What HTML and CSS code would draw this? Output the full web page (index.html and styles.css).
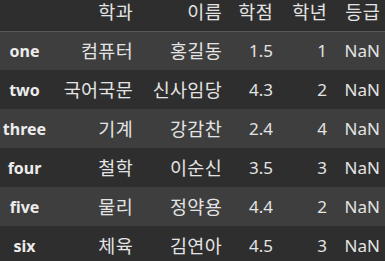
FILE: index.html
```html
<!DOCTYPE html>
<html lang="ko">
<head>
<meta charset="utf-8">
<link rel="stylesheet" href="styles.css">
</head>
<body>
<table class="df">
  <colgroup>
    <col class="c-idx"><col class="c-dept"><col class="c-name"><col class="c-score"><col class="c-year"><col class="c-grade">
  </colgroup>
  <thead>
    <tr><th></th><th class="ko">학과</th><th class="ko">이름</th><th class="ko">학점</th><th class="ko">학년</th><th class="ko">등급</th></tr>
  </thead>
  <tbody>
    <tr class="odd"><th>one</th><td class="ko">컴퓨터</td><td class="ko">홍길동</td><td>1.5</td><td>1</td><td>NaN</td></tr>
    <tr><th>two</th><td class="ko">국어국문</td><td class="ko">신사임당</td><td>4.3</td><td>2</td><td>NaN</td></tr>
    <tr class="odd"><th>three</th><td class="ko">기계</td><td class="ko">강감찬</td><td>2.4</td><td>4</td><td>NaN</td></tr>
    <tr><th>four</th><td class="ko">철학</td><td class="ko">이순신</td><td>3.5</td><td>3</td><td>NaN</td></tr>
    <tr class="odd"><th>five</th><td class="ko">물리</td><td class="ko">정약용</td><td>4.4</td><td>2</td><td>NaN</td></tr>
    <tr><th>six</th><td class="ko">체육</td><td class="ko">김연아</td><td>4.5</td><td>3</td><td>NaN</td></tr>
  </tbody>
</table>
</body>
</html>
```
FILE: styles.css
```css
html, body {
  margin: 0;
  padding: 0;
  background: #2e2e2e;
  overflow: hidden;
}
.df {
  border-collapse: collapse;
  table-layout: fixed;
  width: 385px;
  font-family: "Noto Sans", "Noto Sans CJK KR", sans-serif;
  font-size: 17px;
  color: #e4e4e4;
}
.c-idx { width: 49px; }
.c-dept { width: 89px; }
.c-name { width: 89px; }
.c-score { width: 51px; }
.c-year { width: 54px; }
.c-grade { width: 53px; }
.df thead th {
  height: 30px;
  padding: 0 5px 0 0;
  text-align: right;
  vertical-align: top;
  line-height: 23px;
  font-weight: normal;
  border-bottom: 1px solid #575757;
  box-sizing: border-box;
}
.df thead tr { height: 31px; }
.df tbody tr { height: 39px; }
.df tbody tr.odd { background: #3e3e3e; }
.df td {
  padding: 0 5px 0 0;
  text-align: right;
  vertical-align: middle;
  line-height: 24px;
  white-space: nowrap;
}
.df .ko {
  font-size: 18.5px;
  letter-spacing: 0.3px;
}
.df tbody th {
  padding: 0;
  text-align: center;
  font-weight: bold;
  font-size: 16px;
  vertical-align: middle;
  line-height: 24px;
  color: #ececec;
}
```
